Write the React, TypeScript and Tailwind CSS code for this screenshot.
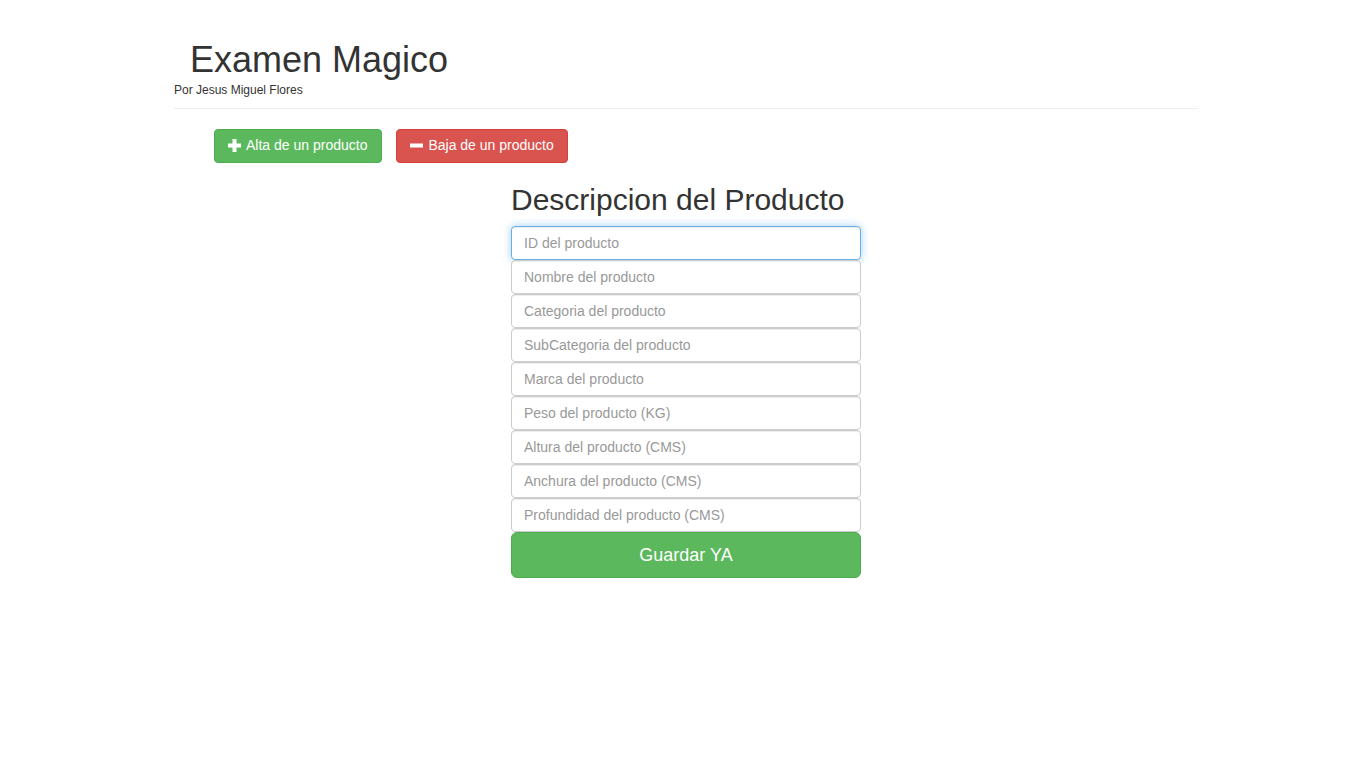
import React from 'react';

const fields = [
  'ID del producto',
  'Nombre del producto',
  'Categoria del producto',
  'SubCategoria del producto',
  'Marca del producto',
  'Peso del producto (KG)',
  'Altura del producto (CMS)',
  'Anchura del producto (CMS)',
  'Profundidad del producto (CMS)',
];

const PlusIcon = () => (
  <svg width="13" height="13" viewBox="0 0 13 13" className="shrink-0">
    <rect x="4.5" y="0" width="4" height="13" fill="white" />
    <rect x="0" y="4.5" width="13" height="4" fill="white" />
  </svg>
);

const MinusIcon = () => (
  <svg width="13" height="13" viewBox="0 0 13 13" className="shrink-0">
    <rect x="0" y="4.5" width="13" height="4" fill="white" />
  </svg>
);

const App = () => {
  return (
    <div className="min-h-screen bg-white text-[#333] font-['Liberation_Sans',Arial,sans-serif]">
      <div className="w-[1024px] ml-[174px]">
        {/* Header */}
        <div className="pt-[40px]">
          <h1 className="pl-4 text-[36px] leading-[1.1] font-normal">Examen Magico</h1>
          <p className="text-[12px] leading-[17px] mt-[2px]">Por Jesus Miguel Flores</p>
        </div>
        <hr className="mt-[9px] border-0 border-t border-[#eee]" />

        {/* Actions */}
        <div className="flex gap-[14px] pl-10 mt-5">
          <button className="flex items-center gap-[5px] h-[34px] pl-[13px] pr-[14px] rounded border border-[#4cae4c] bg-[#5cb85c] text-white text-[14px]">
            <PlusIcon />
            Alta de un producto
          </button>
          <button className="flex items-center gap-[5px] h-[34px] pl-[13px] pr-[13px] rounded border border-[#d43f3a] bg-[#d9534f] text-white text-[14px]">
            <MinusIcon />
            Baja de un producto
          </button>
        </div>

        {/* Form */}
        <div className="w-[350px] mx-auto mt-5">
          <h2 className="text-[30px] leading-[1.1] font-normal mb-[10px]">Descripcion del Producto</h2>
          <div className="flex flex-col">
            {fields.map((f, i) => (
              <input
                key={f}
                placeholder={f}
                className={
                  i === 0
                    ? 'h-[34px] px-3 text-[14px] rounded border border-[#66afe9] bg-white outline-none shadow-[inset_0_1px_1px_rgba(0,0,0,0.075),0_0_8px_rgba(102,175,233,0.6)] placeholder:text-[#999]'
                    : 'h-[34px] px-3 text-[14px] rounded border border-[#ccc] bg-white outline-none shadow-[inset_0_1px_1px_rgba(0,0,0,0.075)] placeholder:text-[#999]'
                }
              />
            ))}
            <button className="h-[46px] pt-px rounded-md border border-[#4cae4c] bg-[#5cb85c] text-white text-[18px]">
              Guardar YA
            </button>
          </div>
        </div>
      </div>
    </div>
  );
};

export default App;
